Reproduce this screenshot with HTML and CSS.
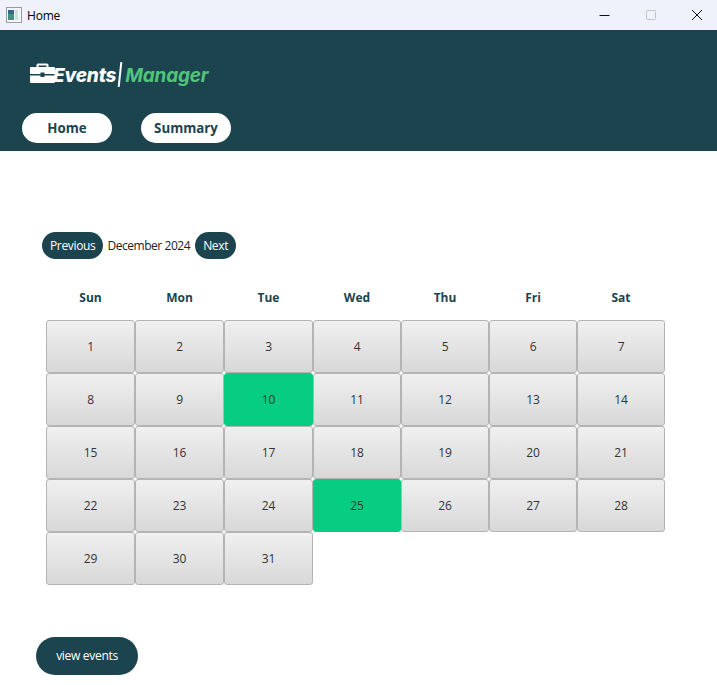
FILE: index.html
```html
<!DOCTYPE html>
<html lang="en">
<head>
<meta charset="utf-8">
<title>Home</title>
<link rel="stylesheet" href="styles.css">
</head>
<body>
<div class="titlebar">
  <div class="title-left">
    <svg class="app-icon" width="16" height="16" viewBox="0 0 16 16"><rect x="0.5" y="0.5" width="15" height="15" fill="#f2f4f6" stroke="#9a9ea3"/><rect x="2" y="3" width="6" height="10" fill="#3f8f86"/><rect x="2" y="3" width="6" height="4" fill="#35688a"/><rect x="9" y="3" width="3" height="10" fill="#cfe0d8"/></svg>
    <span class="title-text">Home</span>
  </div>
  <div class="win-controls">
    <svg width="12" height="12" viewBox="0 0 12 12"><path d="M0.5 6.5H10.5" stroke="#111" stroke-width="1"/></svg>
    <svg width="12" height="12" viewBox="0 0 12 12"><rect x="1.5" y="1.5" width="9" height="9" rx="1" fill="none" stroke="#c4c4c6"/></svg>
    <svg width="12" height="12" viewBox="0 0 12 12"><path d="M1 1L11 11M11 1L1 11" stroke="#111" stroke-width="1"/></svg>
  </div>
</div>
<header class="header">
  <div class="logo">
    <svg class="logo-icon" width="25" height="21" viewBox="0 0 25 21"><path fill="#fff" d="M8 0.500h9a1.500 1.500 0 0 1 1.500 1.500V4H24a1 1 0 0 1 1 1v6H14.500V9.500h-4V11H0V5a1 1 0 0 1 1-1h5.500V2A1.500 1.500 0 0 1 8 .5zM8.500 2.500V4h8V2.500zM0 12.500h10.500V14h4v-1.500H25V19a1 1 0 0 1-1 1H1a1 1 0 0 1-1-1z"/></svg>
    <span class="logo-events">Events</span>
    <span class="logo-bar"></span>
    <span class="logo-manager">Manager</span>
  </div>
  <nav class="nav">
    <a class="nav-pill">Home</a>
    <a class="nav-pill">Summary</a>
  </nav>
</header>
<main class="main">
  <div class="month-row">
    <button class="pill">Previous</button>
    <span class="month-label">December 2024</span>
    <button class="pill">Next</button>
  </div>
  <div class="calendar">
    <div class="dow">Sun</div><div class="dow">Mon</div><div class="dow">Tue</div><div class="dow">Wed</div><div class="dow">Thu</div><div class="dow">Fri</div><div class="dow">Sat</div>
    <div class="day">1</div><div class="day">2</div><div class="day">3</div><div class="day">4</div><div class="day">5</div><div class="day">6</div><div class="day">7</div>
    <div class="day">8</div><div class="day">9</div><div class="day marked">10</div><div class="day">11</div><div class="day">12</div><div class="day">13</div><div class="day">14</div>
    <div class="day">15</div><div class="day">16</div><div class="day">17</div><div class="day">18</div><div class="day">19</div><div class="day">20</div><div class="day">21</div>
    <div class="day">22</div><div class="day">23</div><div class="day">24</div><div class="day marked">25</div><div class="day">26</div><div class="day">27</div><div class="day">28</div>
    <div class="day">29</div><div class="day">30</div><div class="day">31</div>
  </div>
  <button class="view-events">view events</button>
</main>
</body>
</html>
```
FILE: styles.css
```css
* { box-sizing: border-box; }
html, body { margin: 0; padding: 0; }
body {
  width: 717px;
  height: 685px;
  overflow: hidden;
  background: #fff;
  font-family: "Open Sans", "Noto Sans", sans-serif;
  color: #1c1c1c;
}
.titlebar {
  height: 30px;
  background: #eff2fa;
  display: flex;
  align-items: center;
  justify-content: space-between;
}
.title-left { display: flex; align-items: center; padding-left: 6px; }
.app-icon { width: 16px; height: 16px; }
.title-text { margin-left: 5px; font-size: 12px; letter-spacing: -0.2px; color: #000; }
.win-controls { display: flex; gap: 34px; padding-right: 14px; }
.header {
  height: 121px;
  background: #1b444f;
  padding: 30px 0 0 22px;
}
.logo { display: flex; align-items: center; height: 26px; margin-left: 8px; font-family: Inter, sans-serif; font-weight: 800; font-style: italic; font-size: 19px; }
.logo-icon { flex: none; margin: 1px -2px 0 0; }
.logo-events { color: #fff; letter-spacing: -0.2px; margin-top: 5px; }
.logo-bar { width: 2px; height: 25px; background: #fff; margin: 2px 4px 0 3px; transform: rotate(6deg); }
.logo-manager { color: #52c47c; font-weight: 700; letter-spacing: -0.2px; margin-top: 5px; }
.nav { display: flex; gap: 29px; margin-top: 27px; }
.nav-pill {
  width: 90px;
  height: 30px;
  border-radius: 15px;
  background: #fff;
  color: #1b444f;
  font-weight: 700;
  font-size: 13.3px;
  display: flex;
  align-items: center;
  justify-content: center;
}
.main { padding: 81px 0 0 36px; }
.month-row { display: flex; align-items: center; gap: 4px; margin-left: 6px; height: 27px; }
.pill {
  height: 27px;
  min-width: 41px;
  border: 0;
  border-radius: 14px;
  background: #1b444f;
  color: #fff;
  font: 12px "Open Sans", sans-serif;
  letter-spacing: -0.35px;
  padding: 0 8px 1px;
}
.month-label { font-size: 12px; letter-spacing: -0.45px; color: #222; margin-right: 1px; }
.calendar {
  display: grid;
  grid-template-columns: 89px 89px 89px 88px 88px 88px 88px;
  grid-template-rows: 61px repeat(5, 53px);
  margin: 0 0 0 10px;
  width: 619px;
}
.dow {
  display: flex;
  justify-content: center;
  align-items: center;
  font-size: 12px;
  font-weight: 700;
  color: #1b444f;
  padding-top: 22px;
  padding-bottom: 7px;
}
.day {
  display: flex;
  align-items: center;
  justify-content: center;
  font-size: 12px;
  letter-spacing: -0.2px;
  color: #333;
  border: 1px solid #b4b4b4;
  border-radius: 3px;
  background: linear-gradient(#f0f0f0, #d8d8d8);
}
.day.marked { background: #07cd82; border-color: #07cd82; }
.view-events {
  display: block;
  margin-top: 52px;
  width: 102px;
  height: 38px;
  border: 0;
  border-radius: 19px;
  background: #1b444f;
  color: #fff;
  font: 12px "Open Sans", sans-serif;
  letter-spacing: -0.3px;
  padding: 0 0 1px;
}
```
